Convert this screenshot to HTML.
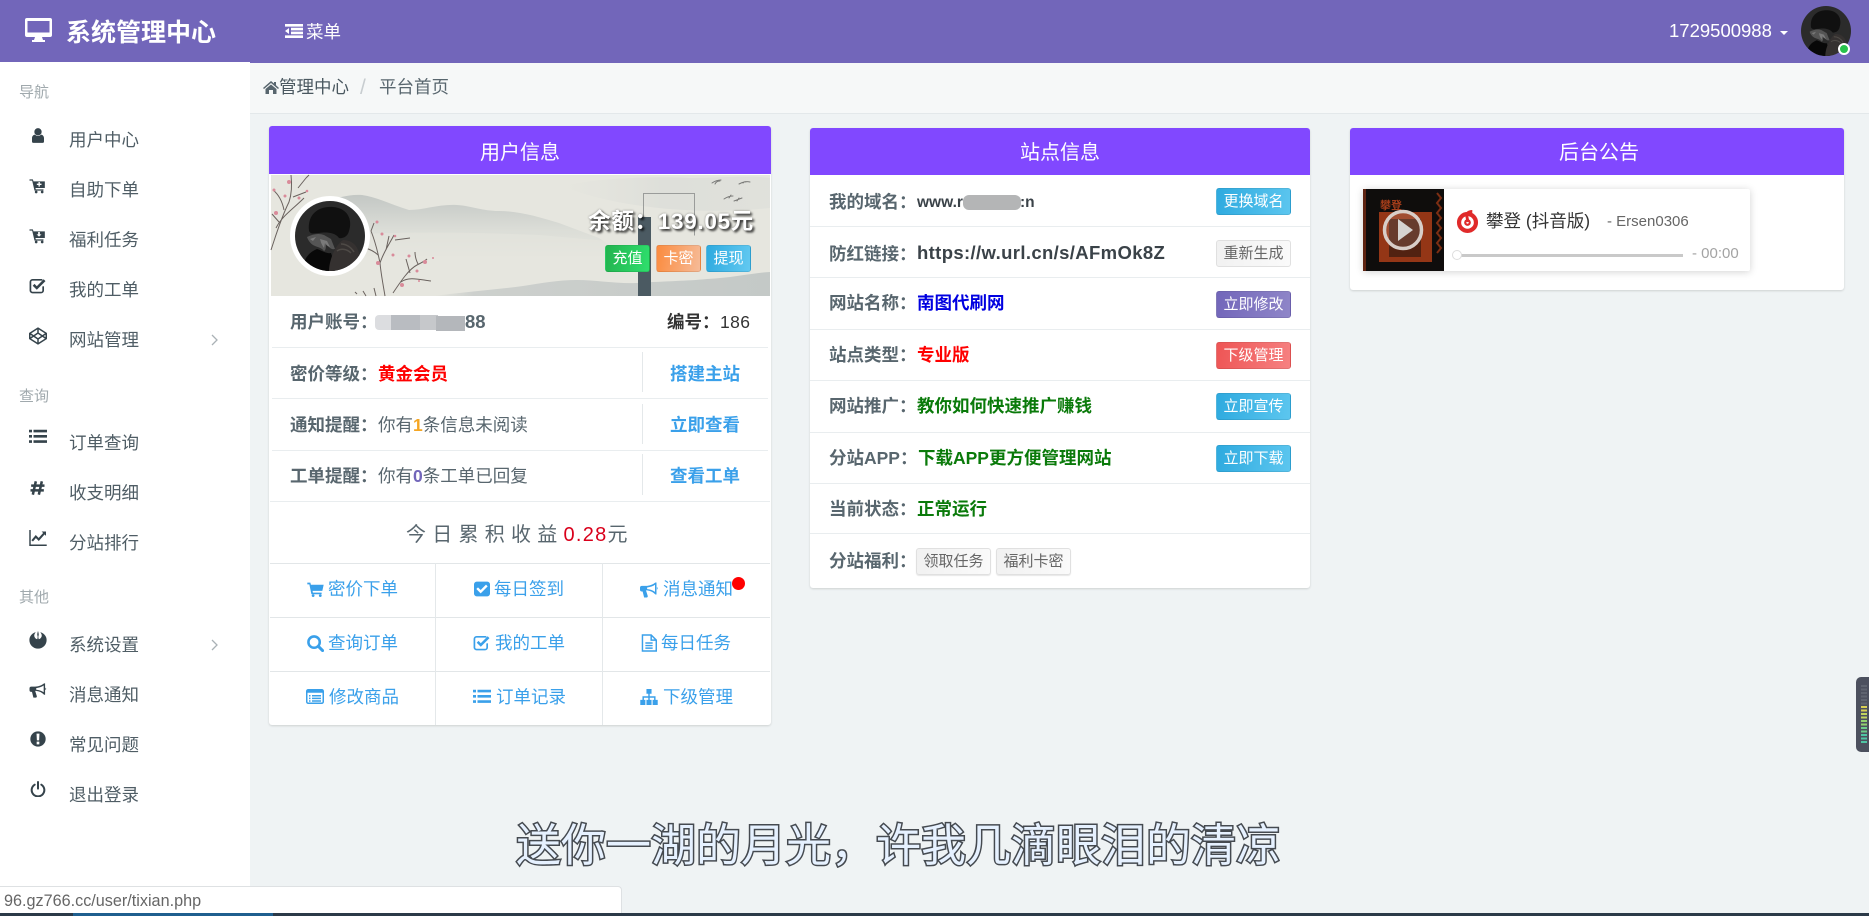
<!DOCTYPE html>
<html lang="zh-CN"><head><meta charset="utf-8"><title>系统管理中心</title>
<style>
*{box-sizing:border-box}
html,body{margin:0;padding:0;width:1869px;height:916px;overflow:hidden;background:#eff3f4;font-family:"Liberation Sans","Noto Sans CJK SC",sans-serif;font-size:17.5px;color:#58666e}
.t{position:absolute;white-space:nowrap;line-height:30px;margin-top:-15px}
.a{position:absolute}
.i{position:absolute;overflow:visible}
.nav{color:#4f5d65}
.lab{color:#a0a9ad;font-size:15px}
.ic{color:#35434b}
.bl{color:#3aa0ea}
.bd{font-weight:bold}
.line{position:absolute;background:#e9edef;height:1px}
.card{position:absolute;background:#fff;border-radius:3px;box-shadow:0 1px 2px rgba(0,0,0,.14)}
.head{position:absolute;background:#8148ff;color:#fff;font-size:20px;text-align:center;border-radius:3px 3px 0 0}
.b{position:absolute;width:75px;height:27px;line-height:26px;border-radius:3px;font-size:15px;text-align:center;color:#fff;border:1px solid rgba(0,0,0,.08)}
.blue{background:linear-gradient(100deg,#2eaadf,#5cc6ef)}
.gray{background:linear-gradient(100deg,#f1f1f1,#fafafa);color:#666;border:1px solid #e0e0e0}
.pur{background:linear-gradient(100deg,#7266ba,#8f86c8)}
.red{background:linear-gradient(100deg,#ee5555,#f68181)}
.s{position:absolute;width:45px;height:27px;line-height:26px;top:245px;border-radius:3px;font-size:15px;text-align:center;color:#fff;border:1px solid rgba(0,0,0,.08)}
.v{color:#e2e6e8;position:absolute;width:1px;background:#e4e8ea}
</style></head><body>
<svg width="0" height="0" style="position:absolute">
<defs>
<symbol id="desktop" viewBox="0 0 27 24"><path fill="currentColor" fill-rule="evenodd" d="M2 0h23a2 2 0 0 1 2 2v15a2 2 0 0 1-2 2h-8l1 3h2v2H7v-2h2l1-3H2a2 2 0 0 1-2-2V2a2 2 0 0 1 2-2zM2.500 3v11.500h22V3z"/></symbol>
<symbol id="indent" viewBox="0 0 18 14"><path fill="currentColor" d="M0 0h18v2.600H0zM6 3.800h12v2.600H6zM6 7.600h12v2.600H6zM0 11.400h18V14H0zM4 4v6L0 7z"/></symbol>
<symbol id="home" viewBox="0 0 16 13"><path fill="currentColor" d="M8 0l3 2.500V1h2v3.200L16 7l-1 1-7-6-7 6-1-1zM2.500 8L8 3.500 13.500 8v5H10V9H6v4H2.500z"/></symbol>
<symbol id="user" viewBox="0 0 24 24"><circle cx="12" cy="6.500" r="5.500" fill="currentColor"/><path fill="currentColor" d="M3 21v-5c0-3 2-5 4.500-5.300 1 1.200 2.800 2.100 4.500 2.100s3.500-.9 4.500-2.100C19 11 21 13 21 16v5a2 2 0 0 1-2 2H5a2 2 0 0 1-2-2z"/></symbol>
<symbol id="cartp" viewBox="0 0 24 24"><path fill="currentColor" d="M0 2h5l1 3h17v10H9l.4 2H21v2H7.500L4 4H0z"/><circle cx="10" cy="21" r="2" fill="currentColor"/><circle cx="19" cy="21" r="2" fill="currentColor"/><path fill="#fff" d="M13.500 6h2v2.500H18v2h-2.500V13h-2v-2.500H11v-2h2.500z"/></symbol>
<symbol id="cartd" viewBox="0 0 24 24"><path fill="currentColor" d="M0 2h5l1 3h17v10H9l.4 2H21v2H7.500L4 4H0z"/><circle cx="10" cy="21" r="2" fill="currentColor"/><circle cx="19" cy="21" r="2" fill="currentColor"/><path fill="#fff" d="M13 6h2.500v3.500H18L14.300 13l-3.800-3.500H13z"/></symbol>
<symbol id="checko" viewBox="0 0 24 24"><path fill="none" stroke="currentColor" stroke-width="2.400" stroke-linecap="round" d="M20 14v5a3 3 0 0 1-3 3H5a3 3 0 0 1-3-3V7a3 3 0 0 1 3-3h13"/><path fill="none" stroke="currentColor" stroke-width="3.600" d="M6.500 11l4.500 4.500L22 4.500"/></symbol>
<symbol id="codepen" viewBox="0 0 24 24"><path fill="none" stroke="currentColor" stroke-width="2" stroke-linejoin="round" d="M12 1.500L23 8.500v7L12 22.500 1 15.500v-7zM12 1.500v6.500M12 16v6.500M1 8.500L12 16l11-7.500M1 15.500L12 8l11 7.500"/></symbol>
<symbol id="list" viewBox="0 0 24 20"><path fill="currentColor" d="M0 1h4v3.500H0zM6 1h18v3.500H6zM0 8h4v3.500H0zM6 8h18v3.500H6zM0 15h4v3.500H0zM6 15h18v3.500H6z"/></symbol>
<symbol id="hash" viewBox="0 0 24 24"><path fill="none" stroke="currentColor" stroke-width="3.800" d="M9.500 2L5 22M18.500 2L14 22M2.500 8.500h20M1.500 15.500h20"/></symbol>
<symbol id="chart" viewBox="0 0 24 22"><path fill="currentColor" d="M0 0h2v20h22v2H0z"/><path fill="none" stroke="currentColor" stroke-width="2.800" d="M4 15l5-6 4 4 8-9"/><path fill="currentColor" d="M17 2h6v6z"/></symbol>
<symbol id="rebel" viewBox="0 0 24 24"><path fill="currentColor" d="M12 0c.6 2 1 3.500 1 5l-.6 3 .6 3c2.500-.5 4-3 4-5 0-1.500-.8-3-2-4.500C20 3 23.500 7 23.500 12c0 6.500-5 11.500-11.500 11.500S.5 18.500.5 12C.5 7 4 3 9 1.500 7.800 3 7 4.500 7 6c0 2 1.500 4.500 4 5l.6-3-.6-3c0-1.500.4-3 1-5z"/></symbol>
<symbol id="horn" viewBox="0 0 24 24"><path fill="currentColor" fill-rule="evenodd" d="M22 2v16h-1.500C17 14 12 12.500 8 12.500l2.500 8-1 1.500H5.500L3.500 14H2.500A2.500 2.500 0 0 1 0 11.500V9a2.500 2.500 0 0 1 2.500-2.500H8C12 6.500 17 5 20.500 2zM20 5C17 7.300 13 8.300 9.500 8.600v2.300C13 11.200 17 12.200 20 14.500z"/><path fill="currentColor" d="M22.500 8a2 2 0 0 1 0 3.500z"/></symbol>
<symbol id="excl" viewBox="0 0 24 24"><circle cx="12" cy="12" r="11.500" fill="currentColor"/><path fill="#fff" d="M9.800 4h4.400l-.5 10h-3.400zM10 16h4v4h-4z"/></symbol>
<symbol id="power" viewBox="0 0 24 24"><path fill="none" stroke="currentColor" stroke-width="3" stroke-linecap="round" d="M7 5.500a9.500 9.500 0 1 0 10 0M12 1.500v10"/></symbol>
<symbol id="cart" viewBox="0 0 24 22"><path fill="currentColor" d="M0 1h4.500l.7 3H24l-2 9H7.700l.5 2.500H21v2.500H6L3 3.500H0z"/><circle cx="8.500" cy="20" r="2" fill="currentColor"/><circle cx="19" cy="20" r="2" fill="currentColor"/></symbol>
<symbol id="checkf" viewBox="0 0 24 24"><path fill="currentColor" fill-rule="evenodd" d="M4 1h16a4 4 0 0 1 4 4v14a4 4 0 0 1-4 4H4a4 4 0 0 1-4-4V5a4 4 0 0 1 4-4zM10 18.500L20.500 8 18 5.500l-8 8-4-4L3.500 12z"/></symbol>
<symbol id="search" viewBox="0 0 24 24"><circle cx="10" cy="10" r="8" fill="none" stroke="currentColor" stroke-width="3.600"/><path stroke="currentColor" stroke-width="4.200" stroke-linecap="round" d="M16 16l6 6"/></symbol>
<symbol id="file" viewBox="0 0 22 24"><path fill="none" stroke="currentColor" stroke-width="2" d="M2 1h12l7 7v15H2zM14 1v7h7M6 12h10M6 15.500h10M6 19h10"/></symbol>
<symbol id="listalt" viewBox="0 0 24 20"><rect x="1" y="1" width="22" height="18" rx="2" fill="none" stroke="currentColor" stroke-width="2"/><path fill="currentColor" d="M1 1h22v4H1zM4 8h2v2H4zM8 8h12v2H8zM4 11.500h2v2H4zM8 11.500h12v2H8zM4 15h2v2H4zM8 15h12v2H8z"/></symbol>
<symbol id="sitemap" viewBox="0 0 24 22"><path fill="currentColor" d="M8.500 0h7v6.500h-2.500V10H21v5h3v7h-7v-7h2v-3h-6v3h2.500v7h-7v-7H11v-3H5v3h2v7H0v-7h3v-5h8V6.500H8.500z"/></symbol>
<clipPath id="avc"><circle cx="35" cy="35" r="35"/></clipPath>
<symbol id="ava" viewBox="0 0 70 70"><g clip-path="url(#avc)"><rect width="70" height="70" fill="#2b2b2b"/><path fill="#101010" d="M14 30C12 12 25 5 38 6c14 1 20 12 16 24-1 5-6 8-10 7-4-6-14-6-20-5-4 0-8 2-10-2z"/><path fill="#555" d="M12 36c6-3 12-4 17-2l7 4 4 10c-4 1-6-2-9-5 0 3 0 6-2 7-3-4-8-4-11-6-3-2-5-5-6-8z"/><path fill="#a8a8a8" d="M25 38l7 2 3 6c-3-1-4-2-5-4l-1 5c-2-3-3-5-4-9zM15 38l6-2-3 4z" opacity=".45"/><path fill="#080808" d="M8 70c0-10 4-18 14-22 6 2 10 5 14 4l6 18z"/><path fill="#353130" d="M34 70c0-10 6-26 14-31 5 0 12 2 15 10l7 21z"/><path fill="none" stroke="#4e4a46" stroke-width="1.500" d="M46 43c5 0 10 3 13 8M42 50c4-3 10-2 14 2"/></g></symbol>
<linearGradient id="hg" x1="0" y1="0" x2="0" y2="1"><stop offset="0" stop-color="#c3c7c4"/><stop offset=".55" stop-color="#dbddd7"/><stop offset="1" stop-color="#e6e6df"/></linearGradient>
<linearGradient id="hf" x1="0" y1="0" x2="1" y2="0"><stop offset="0" stop-color="#e6e6df"/><stop offset=".12" stop-color="#cdd0cd"/><stop offset="1" stop-color="#c4c9c7"/></linearGradient>
<linearGradient id="hr" x1="0" y1="0" x2="1" y2="0"><stop offset="0" stop-color="#dcded9" stop-opacity="0"/><stop offset=".5" stop-color="#d8dad6"/><stop offset="1" stop-color="#dcded9"/></linearGradient>
</defs></svg>

<!-- top bar -->
<div class="a" style="left:0;top:0;width:1869px;height:63px;background:#7266ba"></div>
<svg class="i" style="left:25px;top:18px;color:#fff" width="27" height="24"><use href="#desktop"/></svg>
<div class="t bd" style="left:66px;top:33px;font-size:25px;color:#fff;line-height:36px;margin-top:-18px">系统管理中心</div>
<svg class="i" style="left:285px;top:24px;color:#fff" width="18" height="14"><use href="#indent"/></svg>
<div class="t" style="left:306px;top:32px;color:#fff">菜单</div>
<div class="t" style="left:1669px;top:31px;color:#fff;font-size:18.500px">1729500988</div>
<div class="a" style="left:1780px;top:31px;border-left:4.500px solid transparent;border-right:4.500px solid transparent;border-top:4.500px solid #fff"></div>
<svg class="i" style="left:1801px;top:6px" width="50" height="50"><use href="#ava"/></svg>
<div class="a" style="left:1838px;top:43px;width:12px;height:12px;border-radius:50%;background:#27c24c;border:2.500px solid #fff"></div>

<!-- sidebar -->
<div class="a" style="left:0;top:62px;width:250px;height:854px;background:#fff"></div>
<div class="t lab" style="left:19px;top:93px">导航</div>
<div class="t lab" style="left:19px;top:397px">查询</div>
<div class="t lab" style="left:19px;top:598px">其他</div>
<div class="t nav" style="left:69px;top:140px">用户中心</div>
<div class="t nav" style="left:69px;top:190px">自助下单</div>
<div class="t nav" style="left:69px;top:240px">福利任务</div>
<div class="t nav" style="left:69px;top:290px">我的工单</div>
<div class="t nav" style="left:69px;top:340px">网站管理</div>
<div class="t nav" style="left:69px;top:443px">订单查询</div>
<div class="t nav" style="left:69px;top:493px">收支明细</div>
<div class="t nav" style="left:69px;top:543px">分站排行</div>
<div class="t nav" style="left:69px;top:645px">系统设置</div>
<div class="t nav" style="left:69px;top:695px">消息通知</div>
<div class="t nav" style="left:69px;top:745px">常见问题</div>
<div class="t nav" style="left:69px;top:795px">退出登录</div>
<svg class="i ic" style="left:30px;top:127px" width="16" height="17"><use href="#user"/></svg>
<svg class="i ic" style="left:29px;top:178px" width="17" height="16"><use href="#cartp"/></svg>
<svg class="i ic" style="left:29px;top:228px" width="17" height="16"><use href="#cartd"/></svg>
<svg class="i ic" style="left:29px;top:277px" width="17" height="17"><use href="#checko"/></svg>
<svg class="i ic" style="left:29px;top:327px" width="18" height="18"><use href="#codepen"/></svg>
<svg class="i ic" style="left:29px;top:429px" width="18" height="15"><use href="#list"/></svg>
<svg class="i ic" style="left:29px;top:480px" width="17" height="16"><use href="#hash"/></svg>
<svg class="i ic" style="left:28px;top:530px" width="20" height="16"><use href="#chart"/></svg>
<svg class="i ic" style="left:29px;top:631px" width="18" height="18"><use href="#rebel"/></svg>
<svg class="i ic" style="left:29px;top:682px" width="18" height="17"><use href="#horn"/></svg>
<svg class="i ic" style="left:30px;top:731px" width="16" height="16"><use href="#excl"/></svg>
<svg class="i ic" style="left:30px;top:781px" width="16" height="16"><use href="#power"/></svg>
<svg class="i" style="left:210px;top:333px" width="9" height="14"><path d="M2 2l5 5-5 5" fill="none" stroke="#aab2b6" stroke-width="1.300"/></svg>
<svg class="i" style="left:210px;top:638px" width="9" height="14"><path d="M2 2l5 5-5 5" fill="none" stroke="#aab2b6" stroke-width="1.300"/></svg>

<!-- breadcrumb -->
<div class="a" style="left:250px;top:63px;width:1619px;height:51px;background:#f6f8f8;border-bottom:1px solid #e3e8ea"></div>
<svg class="i" style="left:263px;top:81px;color:#58666e" width="16" height="13"><use href="#home"/></svg>
<div class="t" style="left:279px;top:87px;color:#4a5860">管理中心</div>
<div class="t" style="left:360px;top:88px;color:#c8cdd0;font-size:21px">/</div>
<div class="t" style="left:379px;top:87px;color:#58666e">平台首页</div>

<!-- panel 1 -->
<div class="card" style="left:269px;top:126px;width:502px;height:599px"></div>
<div class="head" style="left:269px;top:126px;width:502px;height:48px;line-height:54px">用户信息</div>
<svg class="i" style="left:271px;top:175px" width="499" height="121" viewBox="271 175 499 121">
<rect x="271" y="175" width="499" height="121" fill="#e6e6df"/>
<path fill="url(#hr)" opacity=".6" d="M560 186c40-8 90-10 130-8 30 0 60-3 80 0v30c-60 6-140 4-210-22z"/>
<path fill="url(#hg)" d="M325 202c10-4 25-8 37-7 15 2 30 10 47 15 15 0 30-6 48-5 15 1 25 6 42 6 20 0 40 6 60 12l40 15 30 20H320z"/>
<path fill="#e6e6df" opacity=".55" d="M320 238c60-8 140-6 220-3l90 8v30H320z"/>
<path fill="url(#hf)" d="M433 296c30-4 60-6 90-10 20-3 35-6 54-6 20 0 40 4 60 3 30-2 50-2 70-4 25-1 45-6 63-7v24z"/>
<rect x="638" y="217" width="13" height="79" fill="#4b5a62"/>
<path d="M643.500 217v-23.500h51v42" fill="none" stroke="#9a9c9a" stroke-width="1"/>
<g fill="none" stroke="#7a7a78" stroke-width="1" stroke-linecap="round"><path d="M712 183c3-2 6-3 9-3M715 184c1-2 3-3 5-3M739 184c4-2 7-3 11-2M743 183c1-1 2-2 3-1M724 199c3-2 6-3 9-3M729 198l2-3M734 201c3-1 5-2 8-3M737 201l2-3"/></g>
<g fill="none" stroke="#6a625e" stroke-width="1"><path d="M271 250c5-15 10-32 18-48M276 228c6-12 16-18 28-30M289 202c3-9 3-18 2-27M284 210c-2-10-6-16-11-20M279 222l-7-8M298 188l8-10M293 197l13-5M306 178l3-3"/>
<path d="M385 296c-2-12-4-22-5-33-2-10-5-22-9-32M371 231l3-8M378 255c-6-6-18-10-30-8M380 263c4-12 10-20 14-28M386 250l3-14M393 293c8-12 16-24 24-28 4-2 8-4 10-6M401 282c8-6 20-2 30-1M410 273l-4-14M418 264c-2-4-3-8-3-12M395 240l15-2M345 249l-8 3"/>
<path d="M366 296l-3-5M376 296l-2-8M355 292l2 2"/></g>
<g fill="#d98b9a"><circle cx="289" cy="182" r="2"/><circle cx="274" cy="190" r="1.500"/><circle cx="285" cy="196" r="1.500"/><circle cx="299" cy="198" r="1.500"/><circle cx="276" cy="213" r="2"/><circle cx="307" cy="191" r="1.300"/><circle cx="377" cy="222" r="1.500"/><circle cx="382" cy="234" r="1.500"/><circle cx="395" cy="236" r="1.300"/><circle cx="378" cy="263" r="2"/><circle cx="393" cy="255" r="1.500"/><circle cx="409" cy="256" r="1.500"/><circle cx="425" cy="262" r="2"/><circle cx="402" cy="285" r="2"/><circle cx="417" cy="271" r="1.500"/><circle cx="354" cy="239" r="1.500"/><circle cx="433" cy="258" r="1"/><circle cx="419" cy="281" r="1"/></g>
<circle cx="330" cy="236" r="40" fill="#fff"/>
</svg>
<svg class="i" style="left:295px;top:201px" width="70" height="70"><use href="#ava"/></svg>
<div class="t bd" style="right:1115px;top:222px;font-size:22.500px;letter-spacing:.7px;color:#fff;line-height:34px;margin-top:-17px;text-shadow:2px 2px 2px rgba(0,0,0,.75),0 0 2px rgba(0,0,0,.4)">余额：139.05元</div>
<div class="s" style="left:605px;background:linear-gradient(100deg,#22b34f,#2fdf6d)">充值</div>
<div class="s" style="left:656px;background:linear-gradient(100deg,#fb8b3e,#f6bb98)">卡密</div>
<div class="s" style="left:706px;background:linear-gradient(100deg,#2eaadf,#62c9f1)">提现</div>

<div class="t bd" style="left:290px;top:322px">用户账号：</div>
<div class="a" style="left:375px;top:315px;width:16px;height:15px;background:#dcdde0;border-radius:4px 0 0 4px"></div>
<div class="a" style="left:391px;top:315px;width:29px;height:15px;background:#b9bcc1"></div>
<div class="a" style="left:420px;top:315px;width:18px;height:15px;background:#c6c8cb"></div>
<div class="a" style="left:436px;top:316px;width:29px;height:15px;background:#b4b7bb"></div>
<div class="t bd" style="left:465px;top:322px;font-size:18.500px">88</div>
<div class="t bd" style="left:667px;top:322px;color:#333">编号：</div>
<div class="t" style="left:720px;top:322px;color:#333;letter-spacing:.4px">186</div>
<div class="line" style="left:272px;top:347px;width:496px"></div>
<div class="t bd" style="left:290px;top:374px">密价等级：</div>
<div class="t bd" style="left:378px;top:374px;color:#f00">黄金会员</div>
<div class="v" style="left:642px;top:352px;height:40px"></div>
<div class="t bd bl" style="left:670px;top:374px">搭建主站</div>
<div class="line" style="left:272px;top:398px;width:496px"></div>
<div class="t bd" style="left:290px;top:425px">通知提醒：</div>
<div class="t" style="left:378px;top:425px">你有<b style="color:#f5a623">1</b>条信息未阅读</div>
<div class="v" style="left:642px;top:404px;height:40px"></div>
<div class="t bd bl" style="left:670px;top:425px">立即查看</div>
<div class="line" style="left:272px;top:450px;width:496px"></div>
<div class="t bd" style="left:290px;top:476px">工单提醒：</div>
<div class="t" style="left:378px;top:476px">你有<b style="color:#7266ba">0</b>条工单已回复</div>
<div class="v" style="left:642px;top:454px;height:41px"></div>
<div class="t bd bl" style="left:670px;top:476px">查看工单</div>
<div class="line" style="left:270px;top:501px;width:500px"></div>
<div class="t" style="left:406px;top:535px;font-size:20px;letter-spacing:1.250px;word-spacing:-1.800px">今 日 累 积 收 益 <span style="color:#d9001b">0.28</span>元</div>
<div class="line" style="left:270px;top:563px;width:500px;background:#e2e6e8"></div>
<div class="line" style="left:270px;top:617px;width:500px;background:#e2e6e8"></div>
<div class="line" style="left:270px;top:671px;width:500px;background:#e2e6e8"></div>
<div class="v" style="left:435px;top:563px;height:162px"></div>
<div class="v" style="left:602px;top:563px;height:162px"></div>
<svg class="i bl" style="left:307px;top:582px" width="17" height="15"><use href="#cart"/></svg>
<div class="t bl" style="left:328px;top:589px">密价下单</div>
<svg class="i bl" style="left:474px;top:581px" width="16" height="16"><use href="#checkf"/></svg>
<div class="t bl" style="left:494px;top:589px">每日签到</div>
<svg class="i bl" style="left:640px;top:581px" width="18" height="18"><use href="#horn"/></svg>
<div class="t bl" style="left:663px;top:589px">消息通知</div>
<div class="a" style="left:732px;top:577px;width:13px;height:13px;border-radius:50%;background:#f00"></div>
<svg class="i bl" style="left:307px;top:635px" width="17" height="17"><use href="#search"/></svg>
<div class="t bl" style="left:328px;top:643px">查询订单</div>
<svg class="i bl" style="left:473px;top:634px" width="17" height="17"><use href="#checko"/></svg>
<div class="t bl" style="left:495px;top:643px">我的工单</div>
<svg class="i bl" style="left:641px;top:634px" width="16" height="18"><use href="#file"/></svg>
<div class="t bl" style="left:661px;top:643px">每日任务</div>
<svg class="i bl" style="left:306px;top:689px" width="18" height="15"><use href="#listalt"/></svg>
<div class="t bl" style="left:329px;top:697px">修改商品</div>
<svg class="i bl" style="left:473px;top:689px" width="18" height="15"><use href="#list"/></svg>
<div class="t bl" style="left:496px;top:697px">订单记录</div>
<svg class="i bl" style="left:640px;top:689px" width="18" height="16"><use href="#sitemap"/></svg>
<div class="t bl" style="left:663px;top:697px">下级管理</div>

<!-- panel 2 -->
<div class="card" style="left:810px;top:128px;width:500px;height:460px"></div>
<div class="head" style="left:810px;top:128px;width:500px;height:47px;line-height:51px">站点信息</div>
<div class="line" style="left:810px;top:226px;width:500px"></div>
<div class="line" style="left:810px;top:277px;width:500px"></div>
<div class="line" style="left:810px;top:329px;width:500px"></div>
<div class="line" style="left:810px;top:380px;width:500px"></div>
<div class="line" style="left:810px;top:432px;width:500px"></div>
<div class="line" style="left:810px;top:483px;width:500px"></div>
<div class="line" style="left:810px;top:533px;width:500px"></div>
<div class="t bd" style="left:829px;top:202px">我的域名：</div>
<div class="t bd" style="left:917px;top:203px;font-size:15.500px;color:#3a4248">www.r</div>
<div class="a" style="left:963px;top:195px;width:58px;height:15px;border-radius:6px;background:#b4b5b6"></div>
<div class="t bd" style="left:1020px;top:203px;font-size:15.500px;color:#3a4248">:n</div>
<div class="b blue" style="left:1216px;top:188px">更换域名</div>
<div class="t bd" style="left:829px;top:254px">防红链接：</div>
<div class="t bd" style="left:917px;top:253px;color:#3a4248;font-size:18.500px;letter-spacing:.36px">https://w.url.cn/s/AFmOk8Z</div>
<div class="b gray" style="left:1216px;top:240px">重新生成</div>
<div class="t bd" style="left:829px;top:303px">网站名称：</div>
<div class="t bd" style="left:917px;top:303px;color:#0000e0">南图代刷网</div>
<div class="b pur" style="left:1216px;top:291px">立即修改</div>
<div class="t bd" style="left:829px;top:355px">站点类型：</div>
<div class="t bd" style="left:917px;top:355px;color:#f00">专业版</div>
<div class="b red" style="left:1216px;top:342px">下级管理</div>
<div class="t bd" style="left:829px;top:406px">网站推广：</div>
<div class="t bd" style="left:917px;top:406px;color:#0a7a0a">教你如何快速推广赚钱</div>
<div class="b blue" style="left:1216px;top:393px">立即宣传</div>
<div class="t bd" style="left:829px;top:458px">分站APP：</div>
<div class="t bd" style="left:918px;top:458px;color:#0a7a0a">下载APP更方便管理网站</div>
<div class="b blue" style="left:1216px;top:445px">立即下载</div>
<div class="t bd" style="left:829px;top:509px">当前状态：</div>
<div class="t bd" style="left:917px;top:509px;color:#0a7a0a">正常运行</div>
<div class="t bd" style="left:829px;top:561px">分站福利：</div>
<div class="b gray" style="left:916px;top:548px;box-shadow:0 1px 1px rgba(0,0,0,.1)">领取任务</div>
<div class="b gray" style="left:996px;top:548px;box-shadow:0 1px 1px rgba(0,0,0,.1)">福利卡密</div>

<!-- panel 3 -->
<div class="card" style="left:1350px;top:128px;width:494px;height:162px"></div>
<div class="head" style="left:1350px;top:128px;width:494px;height:47px;line-height:51px;padding-left:4px">后台公告</div>
<div class="a" style="left:1363px;top:189px;width:387px;height:82px;background:#fff;box-shadow:0 1px 8px rgba(0,0,0,.18);border-radius:2px"></div>
<svg class="i" style="left:1363px;top:189px" width="81" height="82" viewBox="0 0 81 82">
<rect width="81" height="82" fill="#0f0d0c"/>
<path fill="#5e2412" d="M0 0h3v82H0z"/>
<rect x="16" y="23" width="53" height="50" fill="#943616"/>
<path fill="#0f0d0c" opacity=".5" d="M26 30h32v38H26z"/>
<text x="17" y="20" font-size="11" font-weight="bold" fill="#a33d1a" font-family="Noto Sans CJK SC,sans-serif">攀登</text>
<path d="M74 4l4 5-4 5 4 5-4 5 4 5-4 5 4 5-4 5 4 5-4 5 4 5-4 5" fill="none" stroke="#7d2e13" stroke-width="2"/>
<circle cx="40" cy="41" r="18.500" fill="rgba(255,255,255,.12)" stroke="#d8cec8" stroke-width="3.500"/>
<path d="M35 30l15 11-15 11z" fill="#d6d4d1"/>
</svg>
<svg class="i" style="left:1456px;top:210px" width="23" height="23" viewBox="0 0 24 24"><circle cx="12" cy="13" r="8.800" fill="none" stroke="#e02a2a" stroke-width="4.400"/><circle cx="12" cy="13" r="2.400" fill="#fff" stroke="#e02a2a" stroke-width="2.200"/><path d="M17 1.500c-4 0-6.500 2-5.500 6l1 5" fill="none" stroke="#e02a2a" stroke-width="3"/></svg>
<div class="t" style="left:1486px;top:221px;color:#333">攀登 (抖音版)</div>
<div class="t" style="left:1607px;top:222px;font-size:15px;color:#666">- Ersen0306</div>
<div class="a" style="left:1457px;top:254px;width:226px;height:2.500px;background:#c9c9c9"></div>
<div class="a" style="left:1452px;top:250px;width:10px;height:10px;border-radius:50%;background:#fff;border:1px solid #ddd"></div>
<div class="t" style="left:1692px;top:254px;font-size:15px;color:#a3a3a3">- 00:00</div>

<!-- floating widget -->
<div class="a" style="left:1856px;top:677px;width:13px;height:75px;background:#4c505e;border-radius:5px 0 0 5px"></div>
<svg class="i" style="left:1861px;top:685px" width="6" height="60"><g stroke-width="2"><path stroke="#5f6470" d="M0 1h6M0 4.500h6M0 8h6M0 11.500h6M0 15h6M0 18.500h6"/><path stroke="#d8cf55" d="M0 22h6M0 25.500h6"/><path stroke="#c1d45e" d="M0 29h6M0 32.500h6"/><path stroke="#92d070" d="M0 36h6M0 39.500h6"/><path stroke="#6ccc8a" d="M0 43h6M0 46.500h6"/><path stroke="#4fc5a4" d="M0 50h6M0 53.500h6M0 57h6"/></g></svg>

<!-- subtitle -->
<div class="t" style="left:516px;top:846px;font-size:45px;line-height:60px;margin-top:-30px;color:#e6f1ff;-webkit-text-stroke:3px #454a50;paint-order:stroke fill">送你一湖的月光，许我几滴眼泪的清凉</div>

<!-- status bar -->
<div class="a" style="left:0;top:886px;width:622px;height:27px;background:#fff;border:1px solid #dee1e3;border-left:none;border-bottom:none;border-radius:0 4px 0 0"></div>
<div class="t" style="left:4px;top:901px;font-size:16.200px;color:#666">96.gz766.cc/user/tixian.php</div>
<div class="a" style="left:0;top:913px;width:1869px;height:3px;background:#2b3a48"></div>
<div class="a" style="left:73px;top:913px;width:200px;height:3px;background:#1f5f8f"></div>
</body></html>
